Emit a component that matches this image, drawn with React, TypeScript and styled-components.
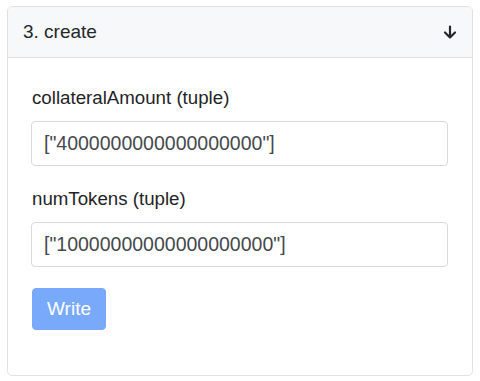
import { FC } from 'react'
import styled, { createGlobalStyle } from 'styled-components'

const GlobalStyle = createGlobalStyle`
  html, body {
    margin: 0;
    padding: 0;
    background: #ffffff;
  }
  body {
    font-family: 'Liberation Sans', Arial, sans-serif;
    color: #212529;
  }
`

const Page = styled.div`
  padding: 6px 7px 0 7px;
`

const Card = styled.div`
  width: 466px;
  height: 370px;
  box-sizing: border-box;
  border: 1px solid #e2e2e4;
  border-radius: 5px;
  overflow: hidden;
  background: #fff;
`

const CardHeader = styled.div`
  display: flex;
  align-items: center;
  justify-content: space-between;
  height: 51px;
  box-sizing: border-box;
  padding: 0 14px 0 15px;
  background: #f7f8f9;
  border-bottom: 1px solid #e2e2e4;
  font-size: 19px;
  color: #24282c;
`

const ArrowIcon = styled.svg`
  width: 16px;
  height: 16px;
  color: #24282c;
`

const CardBody = styled.div`
  padding: 28px 24px 0 23px;
`

const Field = styled.div`
  display: flex;
  flex-direction: column;
  margin-bottom: 21px;
`

const Label = styled.label`
  font-size: 18.7px;
  line-height: 24px;
  margin-left: 1px;
  margin-bottom: 11px;
  color: #1f2327;
`

const Input = styled.input`
  height: 45px;
  box-sizing: border-box;
  border: 1px solid #d6dadf;
  border-radius: 4px;
  padding: 0 12px;
  font-family: 'Liberation Sans', Arial, sans-serif;
  font-size: 19.5px;
  color: #45494d;
  background: #fff;
  outline: none;
`

const WriteButton = styled.button`
  width: 74px;
  height: 42px;
  margin-left: 1px;
  border: 1px solid #78a8fa;
  border-radius: 4px;
  background: #78a9fb;
  color: #ffffff;
  font-family: 'Liberation Sans', Arial, sans-serif;
  font-size: 19px;
  padding: 0;
`

const fields = [
  { label: 'collateralAmount (tuple)', value: '["4000000000000000000"]' },
  { label: 'numTokens (tuple)', value: '["10000000000000000000"]' },
]

const App: FC = () => (
  <Page>
    <GlobalStyle />
    <Card>
      <CardHeader>
        <span>3. create</span>
        <ArrowIcon viewBox="0 0 16 16" fill="none" stroke="currentColor" strokeWidth="2.2" strokeLinecap="round" strokeLinejoin="round">
          <path d="M8 2.5v11M3 8.5l5 5 5-5" />
        </ArrowIcon>
      </CardHeader>
      <CardBody>
        {fields.map((f) => (
          <Field key={f.label}>
            <Label>{f.label}</Label>
            <Input defaultValue={f.value} />
          </Field>
        ))}
        <WriteButton type="button">Write</WriteButton>
      </CardBody>
    </Card>
  </Page>
)

export default App
